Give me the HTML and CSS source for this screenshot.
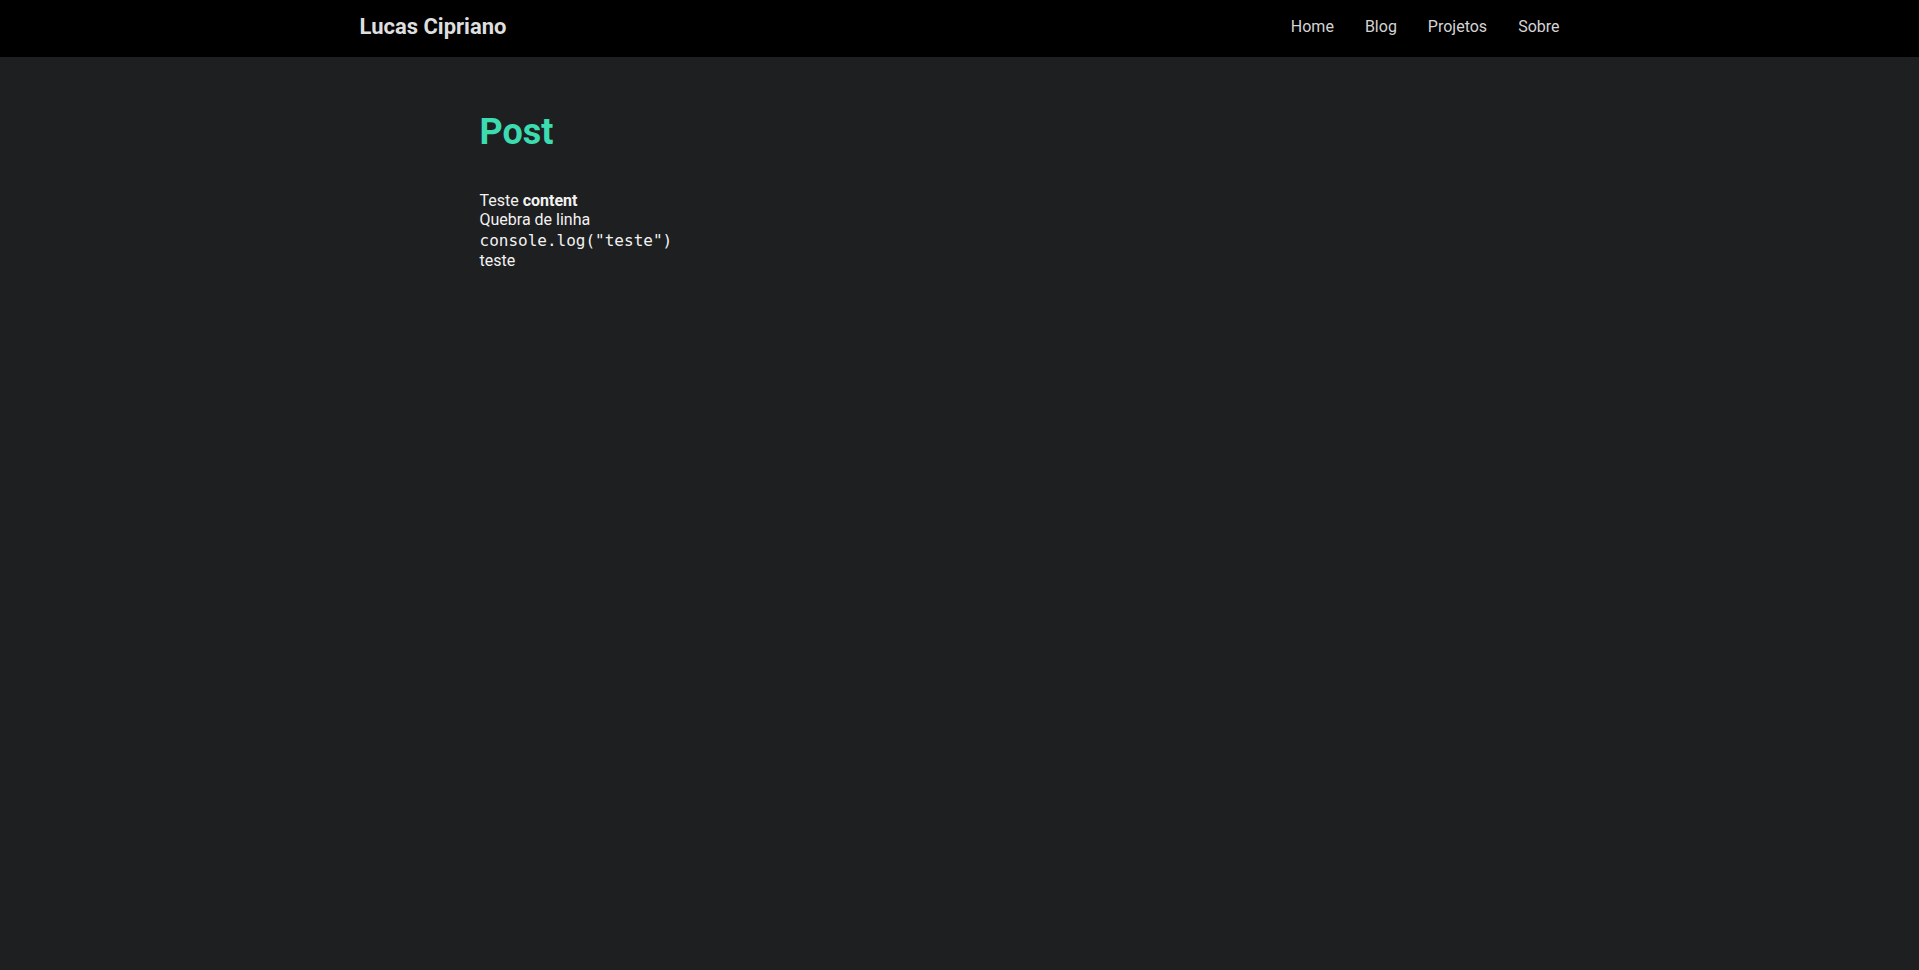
FILE: index.html
```html
<!DOCTYPE html>
<html lang="pt-BR">
<head>
<meta charset="utf-8">
<title>Post - Lucas Cipriano</title>
<link rel="stylesheet" href="styles.css">
</head>
<body>
<header class="site-header">
  <div class="header-inner">
    <a class="logo" href="#">Lucas Cipriano</a>
    <nav class="nav">
      <a href="#">Home</a>
      <a href="#">Blog</a>
      <a href="#">Projetos</a>
      <a href="#">Sobre</a>
    </nav>
  </div>
</header>
<main class="post">
  <h1 class="post-title">Post</h1>
  <div class="post-content">
    <p>Teste <strong>content</strong><br>Quebra de linha</p>
    <pre class="code"><code>console.log("teste")</code></pre>
    <p>teste</p>
  </div>
</main>
</body>
</html>
```

FILE: styles.css
```css
* { box-sizing: border-box; }
html, body { margin: 0; padding: 0; }
body {
  background: #1e1f21;
  color: #f2f2f2;
  font-family: Roboto, "Liberation Sans", sans-serif;
  font-size: 16px;
  min-height: 970px;
}
a { text-decoration: none; color: inherit; }
.site-header {
  background: #000;
  height: 57px;
}
.header-inner {
  max-width: 1200px;
  height: 100%;
  margin: 0 auto;
  padding-bottom: 5px;
  display: flex;
  align-items: center;
  justify-content: space-between;
}
.logo {
  font-size: 22px;
  font-weight: 700;
  color: #dedede;
}
.nav {
  display: flex;
  gap: 31px;
  padding-top: 1px;
}
.nav a {
  color: #d4d4d4;
  font-size: 16px;
}
.post {
  max-width: 960px;
  margin: 0 auto;
  padding-top: 54px;
}
.post-title {
  margin: 0;
  font-size: 36px;
  font-weight: 700;
  color: #3ddbb0;
}
.post-content {
  margin-top: 38px;
}
.post-content p { margin: 0; }
.code {
  margin: 0;
  padding-top: 1px;
  font-family: "DejaVu Sans Mono", "Liberation Mono", monospace;
  font-size: 16px;
  line-height: 21px;
}
```
